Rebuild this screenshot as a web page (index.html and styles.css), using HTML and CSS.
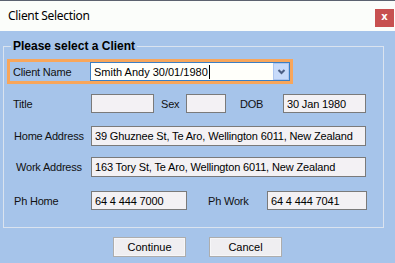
FILE: index.html
```html
<!DOCTYPE html>
<html lang="en">
<head>
<meta charset="utf-8">
<title>Client Selection</title>
<link rel="stylesheet" href="styles.css">
</head>
<body>
<div class="window">
  <div class="titlebar">
    <span class="title">Client Selection</span>
    <button class="close" type="button">x</button>
  </div>
  <fieldset class="group">
    <legend class="legend">Please select a Client</legend>
    <div class="client-row">
      <span class="lbl lbl-client">Client Name</span>
      <div class="combo">
        <span class="combo-text">Smith Andy 30/01/1980<span class="caret"></span></span>
        <span class="combo-btn">
          <svg width="9" height="6" viewBox="0 0 9 6"><path d="M1.5 1 L4.5 4 L7.5 1" fill="none" stroke="#4c5f85" stroke-width="2"/></svg>
        </span>
      </div>
    </div>
    <div class="row row-title">
      <span class="lbl lbl-title">Title</span>
      <span class="box box-title"></span>
      <span class="lbl lbl-sex">Sex</span>
      <span class="box box-sex"></span>
      <span class="lbl lbl-dob">DOB</span>
      <span class="box box-dob">30 Jan 1980</span>
    </div>
    <div class="row row-home">
      <span class="lbl lbl-wide">Home Address</span>
      <span class="box box-addr">39 Ghuznee St, Te Aro, Wellington 6011, New Zealand</span>
    </div>
    <div class="row row-work">
      <span class="lbl lbl-work">Work Address</span>
      <span class="box box-addr">163 Tory St, Te Aro, Wellington 6011, New Zealand</span>
    </div>
    <div class="row row-ph">
      <span class="lbl lbl-wide">Ph Home</span>
      <span class="box box-phhome">64 4 444 7000</span>
      <span class="lbl lbl-phwork">Ph Work</span>
      <span class="box box-phwork">64 4 444 7041</span>
    </div>
  </fieldset>
  <div class="buttons">
    <button class="btn" type="button">Continue</button>
    <button class="btn" type="button">Cancel</button>
  </div>
</div>
</body>
</html>
```

FILE: styles.css
```css
* { box-sizing: border-box; }
html, body { margin: 0; padding: 0; }
body {
  width: 395px;
  height: 263px;
  overflow: hidden;
  background: #a6c4ea;
  font-family: "Liberation Sans", Arial, sans-serif;
  font-size: 11px;
  color: #111;
}
.window { width: 395px; height: 263px; }
.titlebar {
  height: 31px;
  background: #fbfdfa;
  border-top: 1px solid #5b6270;
  display: flex;
  justify-content: space-between;
  align-items: flex-start;
}
.title {
  font-family: "Noto Sans", "Open Sans", sans-serif;
  font-size: 12px;
  letter-spacing: -0.3px;
  line-height: 16px;
  margin: 7px 0 0 8px;
  color: #000;
}
.close {
  width: 19px;
  height: 18px;
  margin: 8px 1px 0 0;
  padding: 0 0 2px 0;
  border: 0;
  background: #c75050;
  color: #fff;
  font: bold 10px "DejaVu Sans", sans-serif;
  line-height: 16px;
}
.group {
  margin: 8px 0 0 3px;
  width: 381px;
  padding: 0 0 17px 0;
  border: 1px solid #dae3ef;
  min-width: 0;
}
.legend {
  margin-left: 7px;
  padding: 0 2px;
  font-weight: bold;
  font-size: 12px;
  line-height: 14px;
  color: #000;
}
.client-row {
  display: flex;
  align-items: center;
  margin: 6px 0 0 3px;
  width: 286px;
  height: 25px;
  border: 3px solid #f8a65b;
  padding-left: 3px;
}
.lbl { white-space: nowrap; letter-spacing: -0.2px; }
.lbl-client { width: 77px; }
.combo {
  width: 200px;
  height: 19px;
  display: flex;
  align-items: center;
  justify-content: space-between;
  border: 1px solid #3b7fc4;
  background: #fffffa;
}
.combo-text {
  padding-left: 3px;
  display: flex;
  align-items: center;
  color: #000;
}
.caret {
  display: inline-block;
  width: 1px;
  height: 14px;
  background: #000;
  margin-left: 1px;
}
.combo-btn {
  width: 16px;
  height: 17px;
  display: flex;
  align-items: center;
  justify-content: center;
  background: #c8dbfa;
  border: 1px solid #adc6ef;
}
.row {
  display: flex;
  align-items: center;
}
.row-title { margin-top: 10px; height: 19px; padding-left: 9px; }
.row-home { margin-top: 13px; height: 20px; padding-left: 10px; }
.row-work { margin-top: 11px; height: 20px; padding-left: 12px; }
.row-ph { margin-top: 14px; height: 19px; padding-left: 10px; }
.lbl-title { width: 78px; }
.lbl-wide { width: 77px; }
.lbl-work { width: 75px; }
.lbl-sex { width: 25px; margin-left: 7px; }
.lbl-dob { width: 43px; margin-left: 14px; }
.lbl-phwork { width: 59px; margin-left: 21px; }
.box {
  height: 100%;
  border: 1px solid #7a7a7a;
  background: #f3f1f4;
  padding-left: 3px;
  display: flex;
  align-items: center;
  color: #000;
  letter-spacing: -0.15px;
  white-space: nowrap;
  overflow: hidden;
}
.box-title { width: 63px; }
.box-sex { width: 40px; }
.box-dob { width: 83px; }
.box-addr { width: 275px; }
.box-phhome { width: 96px; }
.box-phwork { width: 100px; }
.buttons {
  display: flex;
  gap: 23px;
  margin: 9px 0 0 113px;
}
.btn {
  width: 73px;
  height: 20px;
  padding: 0;
  border: 1px solid #adadad;
  background: #efeef1;
  box-shadow: inset 0 0 0 1px #f6f6f8;
  font-family: "Liberation Sans", Arial, sans-serif;
  font-size: 11px;
  color: #000;
}
```
